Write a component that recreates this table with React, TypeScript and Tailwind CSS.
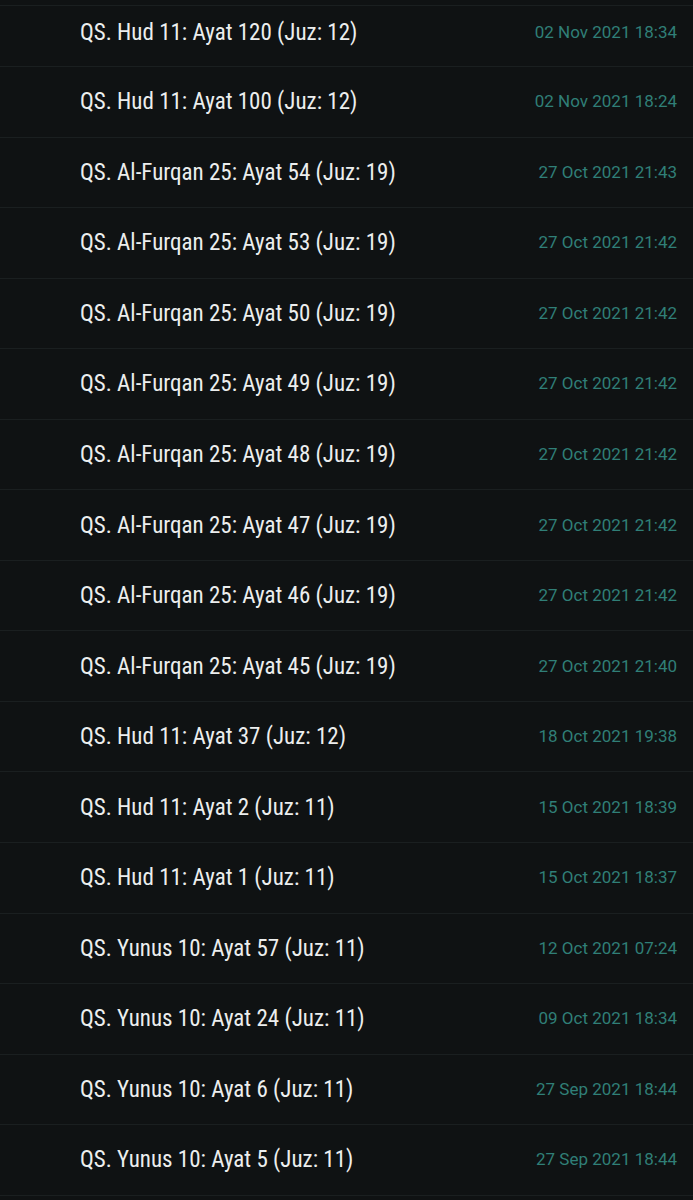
import React from 'react';

type Entry = { title: string; time: string };

const entries: Entry[] = [
  { title: 'QS. Hud 11: Ayat 120 (Juz: 12)', time: '02 Nov 2021 18:34' },
  { title: 'QS. Hud 11: Ayat 100 (Juz: 12)', time: '02 Nov 2021 18:24' },
  { title: 'QS. Al-Furqan 25: Ayat 54 (Juz: 19)', time: '27 Oct 2021 21:43' },
  { title: 'QS. Al-Furqan 25: Ayat 53 (Juz: 19)', time: '27 Oct 2021 21:42' },
  { title: 'QS. Al-Furqan 25: Ayat 50 (Juz: 19)', time: '27 Oct 2021 21:42' },
  { title: 'QS. Al-Furqan 25: Ayat 49 (Juz: 19)', time: '27 Oct 2021 21:42' },
  { title: 'QS. Al-Furqan 25: Ayat 48 (Juz: 19)', time: '27 Oct 2021 21:42' },
  { title: 'QS. Al-Furqan 25: Ayat 47 (Juz: 19)', time: '27 Oct 2021 21:42' },
  { title: 'QS. Al-Furqan 25: Ayat 46 (Juz: 19)', time: '27 Oct 2021 21:42' },
  { title: 'QS. Al-Furqan 25: Ayat 45 (Juz: 19)', time: '27 Oct 2021 21:40' },
  { title: 'QS. Hud 11: Ayat 37 (Juz: 12)', time: '18 Oct 2021 19:38' },
  { title: 'QS. Hud 11: Ayat 2 (Juz: 11)', time: '15 Oct 2021 18:39' },
  { title: 'QS. Hud 11: Ayat 1 (Juz: 11)', time: '15 Oct 2021 18:37' },
  { title: 'QS. Yunus 10: Ayat 57 (Juz: 11)', time: '12 Oct 2021 07:24' },
  { title: 'QS. Yunus 10: Ayat 24 (Juz: 11)', time: '09 Oct 2021 18:34' },
  { title: 'QS. Yunus 10: Ayat 6 (Juz: 11)', time: '27 Sep 2021 18:44' },
  { title: 'QS. Yunus 10: Ayat 5 (Juz: 11)', time: '27 Sep 2021 18:44' },
];

function HistoryRow({ entry, first }: { entry: Entry; first?: boolean }) {
  return (
    <div
      className={
        first
          ? 'flex h-[61px] items-center justify-between border-b border-[#1a1f20] pb-[8px] pl-[80px] pr-[16px]'
          : 'flex h-[70.56px] items-center justify-between border-b border-[#1a1f20] pl-[80px] pr-[16px]'
      }
    >
      <span className="text-[23px] leading-none text-[#eceeee] font-stretch-condensed">
        {entry.title}
      </span>
      <span className="text-[17px] leading-none text-[#307f77]">{entry.time}</span>
    </div>
  );
}

export default function App() {
  return (
    <div
      className="min-h-[1200px] w-full overflow-hidden bg-[#0f1213]"
      style={{ fontFamily: 'Roboto, "Noto Sans", sans-serif' }}
    >
      <div className="h-[6px] border-b border-[#1a1f20]" />
      {entries.map((e, i) => (
        <HistoryRow key={i} entry={e} first={i === 0} />
      ))}
    </div>
  );
}
